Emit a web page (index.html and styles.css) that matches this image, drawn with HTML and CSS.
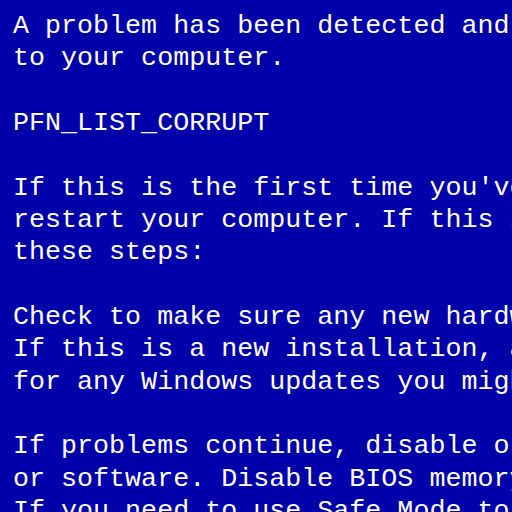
FILE: index.html
```html
<!DOCTYPE html>
<html lang="en">
<head>
  <meta charset="UTF-8">
  <meta name="viewport" content="width=device-width, initial-scale=1.0">
  <title>Stop error</title>
  <link rel="stylesheet" href="styles.css">
</head>
<body>

  <!-- Stop screen text -->
  <pre class="screen">A problem has been detected and windows has been shut down to prevent damage
to your computer.

PFN_LIST_CORRUPT

If this is the first time you've seen this Stop error screen,
restart your computer. If this screen appears again, follow
these steps:

Check to make sure any new hardware or software is properly installed.
If this is a new installation, ask your hardware or software manufacturer
for any Windows updates you might need.

If problems continue, disable or remove any newly installed hardware
or software. Disable BIOS memory options such as caching or shadowing.
If you need to use Safe Mode to remove or disable components, restart
your computer, press F8 to select Advanced Startup Options, and then
select Safe Mode.</pre>

</body>
</html>
```

FILE: styles.css
```css
/* Whole page is the blue screen */
html, body {
  margin: 0;
  height: 100%;
  background-color: #0000aa;
  overflow: hidden;
}

/* Console text */
.screen {
  margin: 0;
  padding: 10px 0 0 13px;
  font-family: "Liberation Mono", "DejaVu Sans Mono", monospace;
  font-size: 26.7px;
  line-height: 32.33px;
  color: #ffffff;
  white-space: pre;
}
```
